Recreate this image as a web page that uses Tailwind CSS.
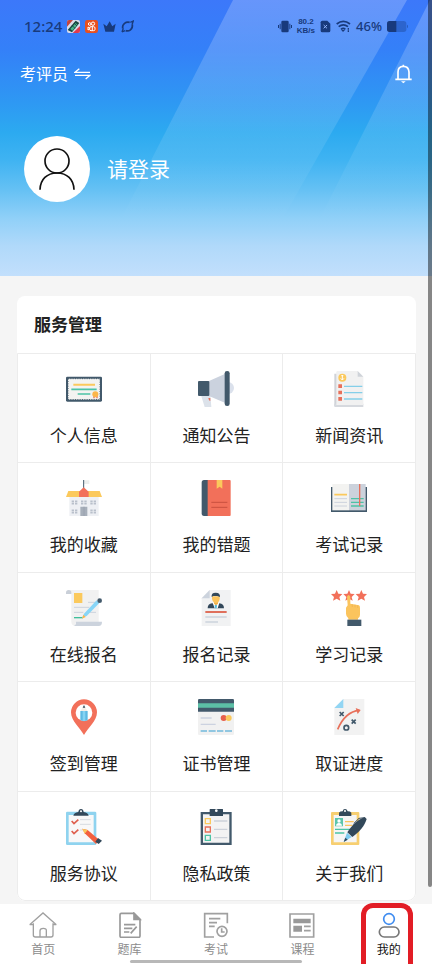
<!DOCTYPE html>
<html lang="zh-CN">
<head>
  <meta charset="UTF-8" />
  <meta name="viewport" content="width=device-width, initial-scale=1.0" />
  <title>我的</title>
  <script src="https://cdn.jsdelivr.net/npm/@tailwindcss/browser@4"></script>
</head>
<body class="relative flex min-h-screen flex-col bg-[#f5f5f5] font-['Noto_Sans','Noto_Sans_CJK_SC',sans-serif] text-[#222]">

  <!-- En-tête -->
  <header class="relative h-[276px] bg-linear-[180deg,#3c78fa_0%,#3480f8_18%,#2e98f3_37%,#2caaf0_48%,#3fb3f2_58%,#66c1f4_69%,#90d0f8_79%,#b0d9fa_89%,#c2dffc_100%]">
    <svg class="absolute inset-0 h-full w-full" viewBox="0 0 432 276" preserveAspectRatio="none" aria-hidden="true">
      <defs>
        <linearGradient id="beam" x1="0" y1="0" x2="0" y2="1">
          <stop offset="0" stop-color="#fff" stop-opacity=".22" />
          <stop offset=".45" stop-color="#fff" stop-opacity=".12" />
          <stop offset=".8" stop-color="#fff" stop-opacity="0" />
        </linearGradient>
      </defs>
      <path d="M233 0H407L250 276H92Z" fill="url(#beam)" />
      <path d="M430 0H432V276H291Z" fill="url(#beam)" />
    </svg>

    <div class="relative">
      <div class="flex h-[52px] items-center justify-between pl-6 pr-6 text-[#183a7c]">
        <div class="flex items-center gap-[5px]">
          <span class="text-[15px] font-medium leading-5">12:24</span>
          <svg class="h-[13px] w-[13px]" viewBox="0 0 39 39" aria-hidden="true">
            <rect width="39" height="39" rx="6" fill="#d9dcec" />
            <path d="M0 6q0-6 6-6h12L0 20z" fill="#c4453f" />
            <path d="M39 18v15q0 6-6 6H17z" fill="#e03a4e" />
            <path d="M2 30 26 2l11 7-22 28z" fill="#17463f" />
            <path d="M10 27 26 9l5 5-15 18z" fill="#47b58b" />
            <path d="m15 16 9 9M22 10l8 8" stroke="#123" stroke-width="2" />
          </svg>
          <svg class="h-[13px] w-[13px]" viewBox="0 0 39 39" fill="none" stroke="#fff" stroke-width="3" aria-hidden="true">
            <rect width="39" height="39" rx="7" fill="#e8501f" stroke="none" />
            <circle cx="14" cy="12" r="4" />
            <circle cx="24" cy="11" r="5" />
            <rect x="14" y="20" width="16" height="12" rx="4" />
            <path d="m14 24-5-3v9l5-3M22 20v12" />
          </svg>
          <svg class="h-[13px] w-[13px]" viewBox="0 0 39 39" fill="currentColor" aria-hidden="true">
            <path d="m1 11 10 8 9-15 8 15 10-8-5 24H7z" />
          </svg>
          <svg class="h-[13px] w-[13px]" viewBox="0 0 39 39" fill="none" stroke="currentColor" stroke-width="5" aria-hidden="true">
            <path d="M5 25C3 12 15 4 26 7M34 14c2 14-10 21-20 18" />
            <path d="M3 36 12 32M28 7l9-4-4 11M3 36l4-11" stroke-width="4" />
          </svg>
        </div>
        <div class="flex items-center gap-[5px]">
          <svg class="h-[13px] w-[14px]" viewBox="0 0 42 39" fill="currentColor" aria-hidden="true">
            <rect x="10" y="2" width="22" height="35" rx="4" />
            <path d="M5 11h3v17H5zM34 11h3v17h-3zM0 15h3v9H0zM39 15h3v9h-3z" />
          </svg>
          <span class="flex flex-col items-center font-['Liberation_Sans',sans-serif] text-[8px] font-bold leading-[9px]">
            <span>80.2</span>
            <span>KB/s</span>
          </span>
          <svg class="h-[13px] w-[11px]" viewBox="0 0 33 39" aria-hidden="true">
            <path d="M2 7q0-5 5-5h15l9 9v21q0 5-5 5H7q-5 0-5-5z" fill="currentColor" />
            <path d="m11 15 10 10M21 15 11 25" stroke="#8fb2f7" stroke-width="3" />
          </svg>
          <svg class="h-[13px] w-[15px]" viewBox="0 0 45 39" fill="none" stroke="currentColor" stroke-width="5" aria-hidden="true">
            <path d="M2 12q20-16 40 0M8 20q14-11 28 0M15 28q7-6 13 0" />
            <path d="m16 30 5 6 6-6z" fill="currentColor" stroke="none" />
            <path d="M37 24v5M37 31v5" stroke-width="4" />
          </svg>
          <span class="text-[13px] font-medium leading-5">46%</span>
          <svg class="h-[11px] w-[21px]" viewBox="0 0 63 33" aria-hidden="true">
            <rect width="58" height="33" rx="8" fill="#183a7c" fill-opacity=".35" />
            <path d="M28 0H8Q0 0 0 8v17q0 8 8 8h20z" fill="#183a7c" />
            <path d="M60 11q3 1 3 5t-3 6z" fill="#183a7c" fill-opacity=".5" />
          </svg>
        </div>
      </div>

      <div class="flex h-11 items-center justify-between pl-5 pr-5 text-white">
        <button type="button" class="flex items-center gap-1.5 text-base leading-6">
          考评员
          <svg class="h-3 w-[17px]" viewBox="0 0 51 36" fill="none" stroke="currentColor" stroke-width="4" aria-hidden="true">
            <path d="M16 2 3 13h45M3 22h45L35 33" />
          </svg>
        </button>
        <button type="button" aria-label="消息">
          <svg class="h-5 w-[17px]" viewBox="0 0 51 60" fill="none" stroke="currentColor" stroke-width="5" aria-hidden="true">
            <path d="M9 46V24Q9 7 25 7t17 17v22M1 46h49M25 2v5" />
            <path d="M18 52h14l-7 6z" fill="currentColor" stroke="none" />
          </svg>
        </button>
      </div>

      <a href="#login" class="mt-10 ml-6 inline-flex items-center gap-[17px] text-[21px] leading-8 text-white">
        <span class="flex size-[66px] items-center justify-center rounded-full bg-white">
          <svg class="h-[42px] w-9" viewBox="0 0 108 126" fill="none" stroke="#111" stroke-width="5" aria-hidden="true">
            <circle cx="54" cy="39" r="36" />
            <path d="M3 125C4 94 24 75 54 75s50 19 51 50" />
          </svg>
        </span>
        请登录
      </a>
    </div>
  </header>

  <main class="flex-1 pt-5 pr-4 pb-[3px] pl-[17px]">
    <section class="overflow-hidden rounded-lg bg-white">
      <h1 class="px-[17px] py-4 text-[17px] font-bold leading-[25px]">服务管理</h1>

      <div class="grid h-[548px] grid-cols-3 grid-rows-5 gap-px border border-[#ececec] bg-[#ececec] text-[17px] leading-6 rounded-b-lg overflow-hidden">
        <a href="#profile" class="flex flex-col items-center gap-[17px] bg-white pt-[17px]">
          <svg class="size-9" viewBox="0 0 108 108" fill="none" aria-hidden="true">
            <rect y="17" width="108" height="75" rx="4" fill="#42596b" />
            <rect x="6" y="23" width="96" height="63" fill="#f3f3f1" />
            <rect x="6" y="23" width="96" height="63" stroke="#42596b" stroke-width="3" stroke-dasharray="3 4" />
            <path d="M22 41h65" stroke="#fbc95c" stroke-width="6" />
            <path d="M16 55h76M35 69h38" stroke="#4cc3a5" stroke-width="5" />
            <path d="M82 74h4v8h-4zM91 74h4v8h-4z" fill="#e8705a" />
            <circle cx="88" cy="70" r="9" fill="#fbb64b" />
          </svg>
          个人信息
        </a>
        <a href="#notice" class="flex flex-col items-center gap-[17px] bg-white pt-[17px]">
          <svg class="size-9" viewBox="0 0 108 108" aria-hidden="true">
            <circle cx="90" cy="51" r="18" fill="#dbe1ec" />
            <path d="M9 73h28l3 35H20z" fill="#dce2ea" />
            <path d="M31 81h6v9l-4-2z" fill="#e8705a" />
            <path d="M33 30 82 8v88L33 75z" fill="#cbd2de" />
            <rect y="30" width="34" height="45" rx="3" fill="#42596b" />
            <rect x="80" width="15" height="105" rx="7" fill="#42596b" />
          </svg>
          通知公告
        </a>
        <a href="#news" class="flex flex-col items-center gap-[17px] bg-white pt-[17px]">
          <svg class="size-9" viewBox="0 0 108 108" fill="none" aria-hidden="true">
            <path d="M10 8h70v100H14q-4 0-4-4z" fill="#d0d3d8" />
            <path d="M10 98h87v10H14q-4 0-4-4z" fill="#d6d9de" />
            <path d="M16 4q0-4 4-4h60l17 17v85H16z" fill="#f1f1f1" />
            <path d="M80 0v17h17z" fill="#cfd3d9" />
            <circle cx="34" cy="20" r="12" fill="#fbc95c" />
            <path d="M34 12v15M29 22l5 5 5-5M31 14h6" stroke="#fff" stroke-width="3" />
            <path d="M22 40h11v11H22zM22 59h11v11H22zM22 78h11v11H22z" fill="#e8705a" />
            <path d="M39 46h55M39 65h55M39 84h55" stroke="#84cfe9" stroke-width="4" />
          </svg>
          新闻资讯
        </a>

        <a href="#favorites" class="flex flex-col items-center gap-[17px] bg-white pt-[17px]">
          <svg class="size-9" viewBox="0 0 108 108" fill="none" aria-hidden="true">
            <path d="M54 1h16v11H54z" fill="#eceeed" />
            <path d="M53 0v26" stroke="#42596b" stroke-width="3" />
            <path d="M10 50h88v58H10z" fill="#eef0f4" />
            <path d="M7 33h94l7 18H0z" fill="#fbc95c" />
            <path d="M39 51V35l14-13 15 13v16z" fill="#f2705a" />
            <path d="M17 64h17M45 64h17M73 64h17M17 71h17M45 71h17M73 71h17M17 91h17M73 91h17M17 98h17M73 98h17" stroke="#b9c0cb" stroke-width="5" stroke-dasharray="7 3" />
            <path d="M43 80h21v28H43z" fill="#a7afba" />
            <path d="M54 80v28" stroke="#959fac" stroke-width="2" />
          </svg>
          我的收藏
        </a>
        <a href="#mistakes" class="flex flex-col items-center gap-[17px] bg-white pt-[17px]">
          <svg class="size-9" viewBox="0 0 108 108" fill="none" aria-hidden="true">
            <path d="M30 0H18q-7 0-7 8v92q0 8 7 8h12z" fill="#42596b" />
            <path d="M29 0h66q3 0 3 3v102q0 3-3 3H29z" fill="#f2705a" />
            <path d="M56 0h17v26l-8-6-9 6z" fill="#fbc95c" />
            <path d="M40 67h48M40 82h48" stroke="#c9503f" stroke-width="3" />
          </svg>
          我的错题
        </a>
        <a href="#exam-records" class="flex flex-col items-center gap-[17px] bg-white pt-[17px]">
          <svg class="size-9" viewBox="0 0 108 108" fill="none" aria-hidden="true">
            <path d="M0 21h108v75H0z" fill="#42596b" />
            <path d="M4 12h50v79H4z" fill="#f3f3f1" />
            <path d="M54 12h50v79H54z" fill="#ccd2dc" />
            <path d="M10 44h38" stroke="#fbc95c" stroke-width="5" />
            <path d="M10 56h38M10 67h38M10 78h38" stroke="#ccd2dc" stroke-width="3" />
            <path d="M60 56h38M60 67h38M60 78h38" stroke="#4cc3a5" stroke-width="4" />
            <path d="M86 12v66" stroke="#e8705a" stroke-width="4" />
          </svg>
          考试记录
        </a>

        <a href="#signup" class="flex flex-col items-center gap-[17px] bg-white pt-[17px]">
          <svg class="size-9" viewBox="0 0 108 108" fill="none" aria-hidden="true">
            <path d="M8 0h90v98H28v10q-12-1-12-12V11z" fill="#f1f1f1" />
            <path d="M0 12V8q0-8 8-8t8 8v4z" fill="#c9cfd8" />
            <path d="M30 95h78q0 13-10 13H23q7-2 7-13z" fill="#ccd3dd" />
            <path d="M24 9h25v30H24z" fill="#fbc95c" />
            <path d="M66 37h24M24 52h46M24 67h28M60 67h30" stroke="#ccd2dc" stroke-width="3" />
            <path d="M24 83h26" stroke="#3fbf9a" stroke-width="4" />
            <path d="m48 84 6-13 38-40 8 8-38 39z" fill="#87d5f7" />
            <path d="m48 86 4-12 7 7z" fill="#fbb64b" />
            <circle cx="101" cy="32" r="7" fill="#42596b" />
          </svg>
          在线报名
        </a>
        <a href="#signup-records" class="flex flex-col items-center gap-[17px] bg-white pt-[17px]">
          <svg class="size-9" viewBox="0 0 108 108" fill="none" aria-hidden="true">
            <path d="M35 0h63v108H11V25z" fill="#f1f2f3" />
            <path d="M35 0v25H11z" fill="#ccd3dd" />
            <path d="M29 55q0-13 13-15h22q14 2 14 15z" fill="#32485a" />
            <path d="M44 39h20l-5 16h-9z" fill="#fff" />
            <path d="m53 43 4 3-1 9h-5l-1-9z" fill="#55b9d8" />
            <path d="M48 32h12v9l-6 5-6-5z" fill="#efb04c" />
            <path d="M42 19h23v8q-2 12-11 12t-12-12z" fill="#fbc45d" />
            <path d="M41 21q-2-13 12-13t13 13l-8-3H46z" fill="#32485a" />
            <path d="M22 66h64" stroke="#df705c" stroke-width="6" />
            <path d="M22 81h64M22 96h38" stroke="#ccd3dd" stroke-width="4" />
          </svg>
          报名记录
        </a>
        <a href="#study-records" class="flex flex-col items-center gap-[17px] bg-white pt-[17px]">
          <svg class="size-9" viewBox="0 0 108 108" aria-hidden="true">
            <g fill="#f2705a">
              <path id="star" d="m17 0 5 11 12 1-9 9 3 11-11-6-11 6 3-11-9-9 12-1z" />
              <use href="#star" x="37" />
              <use href="#star" x="74" />
            </g>
            <path d="M48 20q5-10 10 0v21l26 5q3 2 3 8v20q0 8-6 11v4H52v-4q-7-6-7-14V53l5-7z" fill="#fbc45d" />
            <path d="M64 43v8M72 44v8M80 46v8" stroke="#eeb04e" stroke-width="2" />
            <path d="M49 89h42v19H49z" fill="#42596b" />
          </svg>
          学习记录
        </a>

        <a href="#checkin" class="flex flex-col items-center gap-[17px] bg-white pt-[17px]">
          <svg class="size-9" viewBox="0 0 108 108" aria-hidden="true">
            <path d="M54 108C43 88 15 66 15 40a39 39 0 0 1 78 0c0 26-28 48-39 68z" fill="#f2705a" />
            <circle cx="54" cy="41" r="25" fill="#fff" />
            <path d="M43 36h22v28q-11 5-22 0z" fill="#5fb9e3" />
            <path d="m43 36 11-16 11 16z" fill="#f5efe9" />
            <path d="m50 26 4-8 4 8z" fill="#32485a" />
            <path d="M50 36h8v30h-8z" fill="#86d3f3" />
          </svg>
          签到管理
        </a>
        <a href="#certificates" class="flex flex-col items-center gap-[17px] bg-white pt-[17px]">
          <svg class="size-9" viewBox="0 0 108 108" fill="none" aria-hidden="true">
            <rect width="108" height="108" rx="4" fill="#f1f1f1" />
            <path d="M0 38V4q0-4 4-4h100q4 0 4 4v34z" fill="#42596b" />
            <path d="M0 13h108v13H0z" fill="#5cbfa6" />
            <path d="M8 57h33M8 76h45" stroke="#ccd2e0" stroke-width="4" />
            <circle cx="77" cy="57" r="9" fill="#e8604c" />
            <circle cx="92" cy="57" r="9" fill="#fbc95c" />
            <path d="M8 96h19M32 96h21M57 96h19M81 96h21" stroke="#72b9dc" stroke-width="5" />
          </svg>
          证书管理
        </a>
        <a href="#progress" class="flex flex-col items-center gap-[17px] bg-white pt-[17px]">
          <svg class="size-9" viewBox="0 0 108 108" fill="none" aria-hidden="true">
            <path d="M37 0h63v108H10V27z" fill="#f2f2f2" />
            <path d="M37 0v27H10z" fill="#92d5f3" />
            <path d="M20 91C31 65 49 37 85 34" stroke="#e8705a" stroke-width="5" />
            <path d="m74 27 15 6-9 12z" fill="#e8705a" />
            <path d="m26 39 12 12M38 39 26 51M62 62l12 12M74 62 62 74" stroke="#42596b" stroke-width="5" />
            <circle cx="46" cy="86" r="7" stroke="#42596b" stroke-width="5" />
          </svg>
          取证进度
        </a>

        <a href="#agreement" class="flex flex-col items-center gap-[17px] bg-white pt-[17px]">
          <svg class="size-9" viewBox="0 0 108 108" fill="none" aria-hidden="true">
            <rect y="8" width="91" height="100" rx="4" fill="#8fd3ef" />
            <path d="M8 18h75v82H8z" fill="#f8f8f8" />
            <path d="M22 20q2-9 15-11 1-9 8-9t8 9q13 2 15 11z" fill="#32485a" />
            <circle cx="45" cy="7" r="3" fill="#fff" />
            <path d="m17 36 7 8 13-12M17 66l7 8 13-12" stroke="#df604f" stroke-width="5" />
            <path d="M42 32h32M42 46h32M42 63h16M66 76h10" stroke="#d7dbe0" stroke-width="3" />
            <path d="m49 59 16 4 35 30-10 12-34-32z" fill="#f2603f" />
            <path d="m49 59 16 4-9 11z" fill="#fbc95c" />
            <path d="m96 87 12 8-10 10-10-7z" fill="#32485a" />
          </svg>
          服务协议
        </a>
        <a href="#privacy" class="flex flex-col items-center gap-[17px] bg-white pt-[17px]">
          <svg class="size-9" viewBox="0 0 108 108" fill="none" aria-hidden="true">
            <path d="M8 9h93v99H8z" fill="#42596b" />
            <path d="M15 16h79v85H15z" fill="#f3f3f3" />
            <path d="M35 1q0-1 2-1h36q2 0 2 1v20H35z" fill="#32485a" />
            <circle cx="55" cy="5" r="4" fill="#fff" />
            <path d="M22 29h15v15H22z" stroke="#fbc95c" stroke-width="4" />
            <path d="M22 54h15v15H22z" stroke="#e8705a" stroke-width="4" />
            <path d="M22 79h15v15H22z" stroke="#4cc3a5" stroke-width="4" />
            <path d="M48 36h40M48 61h40M48 86h40" stroke="#cdd2da" stroke-width="4" />
          </svg>
          隐私政策
        </a>
        <a href="#about" class="flex flex-col items-center gap-[17px] bg-white pt-[17px]">
          <svg class="size-9" viewBox="0 0 108 108" fill="none" aria-hidden="true">
            <rect y="9" width="85" height="99" rx="3" fill="#f7cf71" />
            <path d="M8 18h69v82H8z" fill="#f5f5f5" />
            <path d="M24 21V11q3-4 11-4 1-7 7-7t8 7q8 0 11 4v10z" fill="#32485a" />
            <circle cx="42" cy="6" r="3" fill="#fff" />
            <path d="M12 27h24v25H12z" fill="#5cc5ac" />
            <circle cx="24" cy="36" r="5" fill="#fff" />
            <path d="M15 50q1-8 9-8t9 8z" fill="#fff" />
            <path d="M42 38h26M42 49h22" stroke="#fbc45d" stroke-width="4" />
            <path d="M12 61h46M12 72h28" stroke="#4cc3a5" stroke-width="4" />
            <path d="m38 99 10-28 14 13z" fill="#7dcbf0" />
            <path d="m38 99 5-13 7 6z" fill="#32485a" />
            <path d="M49 70C64 47 82 30 102 25l5 5C101 51 85 69 64 84z" fill="#32485a" />
            <path d="M68 44 84 28l18-2" stroke="#32485a" stroke-width="3" />
          </svg>
          关于我们
        </a>
      </div>
    </section>
  </main>

  <!-- Barre de navigation -->
  <nav class="sticky bottom-0 grid h-[60px] grid-cols-5 bg-white text-xs leading-4 text-[#8c8c8c]">
    <a href="#home" class="flex flex-col items-center gap-1 pt-2">
      <svg class="h-[26px] w-7" viewBox="0 0 84 78" fill="none" stroke="#a0a0a0" stroke-width="4" aria-hidden="true">
        <path d="M2 38 42 3l40 35M2 38h10M72 38h10M13 34v35q0 6 6 6h47q6 0 6-6V34M33 75V56q0-7 10-7t9 7v19" />
      </svg>
      首页
    </a>
    <a href="#bank" class="flex flex-col items-center gap-1 pt-2">
      <svg class="h-[26px] w-7" viewBox="0 0 84 78" fill="none" stroke="#999" stroke-width="5" aria-hidden="true">
        <path d="M12 8q0-4 4-4h38l18 18v50q0 4-4 4H16q-4 0-4-4z" />
        <path d="M54 4v18h18z" fill="#999" />
        <path d="M24 38h34M24 49h25M24 60h16M62 44 44 64" />
      </svg>
      题库
    </a>
    <a href="#exam" class="flex flex-col items-center gap-1 pt-2">
      <svg class="h-[26px] w-7" viewBox="0 0 84 78" fill="none" stroke="#a0a0a0" stroke-width="5" aria-hidden="true">
        <path d="M36 75H8V5h68v29M21 20h34M21 32h24M21 43h17" />
        <circle cx="60" cy="58" r="15" />
        <path d="M59 49v11h9" />
      </svg>
      考试
    </a>
    <a href="#course" class="flex flex-col items-center gap-1 pt-2">
      <svg class="h-[26px] w-7" viewBox="0 0 84 78" fill="none" stroke="#a0a0a0" stroke-width="5" aria-hidden="true">
        <path d="M6 6h71v69H6z" />
        <path d="M16 20h52v14H16zM16 41h26v18H16z" fill="#999" stroke="none" />
        <path d="M48 43h20M48 56h20" />
      </svg>
      课程
    </a>
    <a href="#mine" aria-current="page" class="relative flex flex-col items-center gap-1 pt-2 text-[#111]">
      <svg class="h-[26px] w-7" viewBox="0 0 84 78" fill="none" stroke-width="5" aria-hidden="true">
        <circle cx="42" cy="21" r="16" stroke="#3f8cf0" />
        <rect x="13" y="45" width="59" height="30" rx="15" stroke="#777" />
      </svg>
      我的
      <span class="absolute -top-px right-[19px] bottom-0 left-[15px] rounded-t-xl border-[5px] border-b-0 border-[#e21d25]"></span>
    </a>
    <span class="absolute bottom-px left-[30%] h-[3px] w-2/5 rounded-full bg-[#b8b8b8]"></span>
  </nav>

  <span class="absolute top-0 right-0 h-[887px] w-1 rounded-b-full bg-black/45"></span>
</body>
</html>
